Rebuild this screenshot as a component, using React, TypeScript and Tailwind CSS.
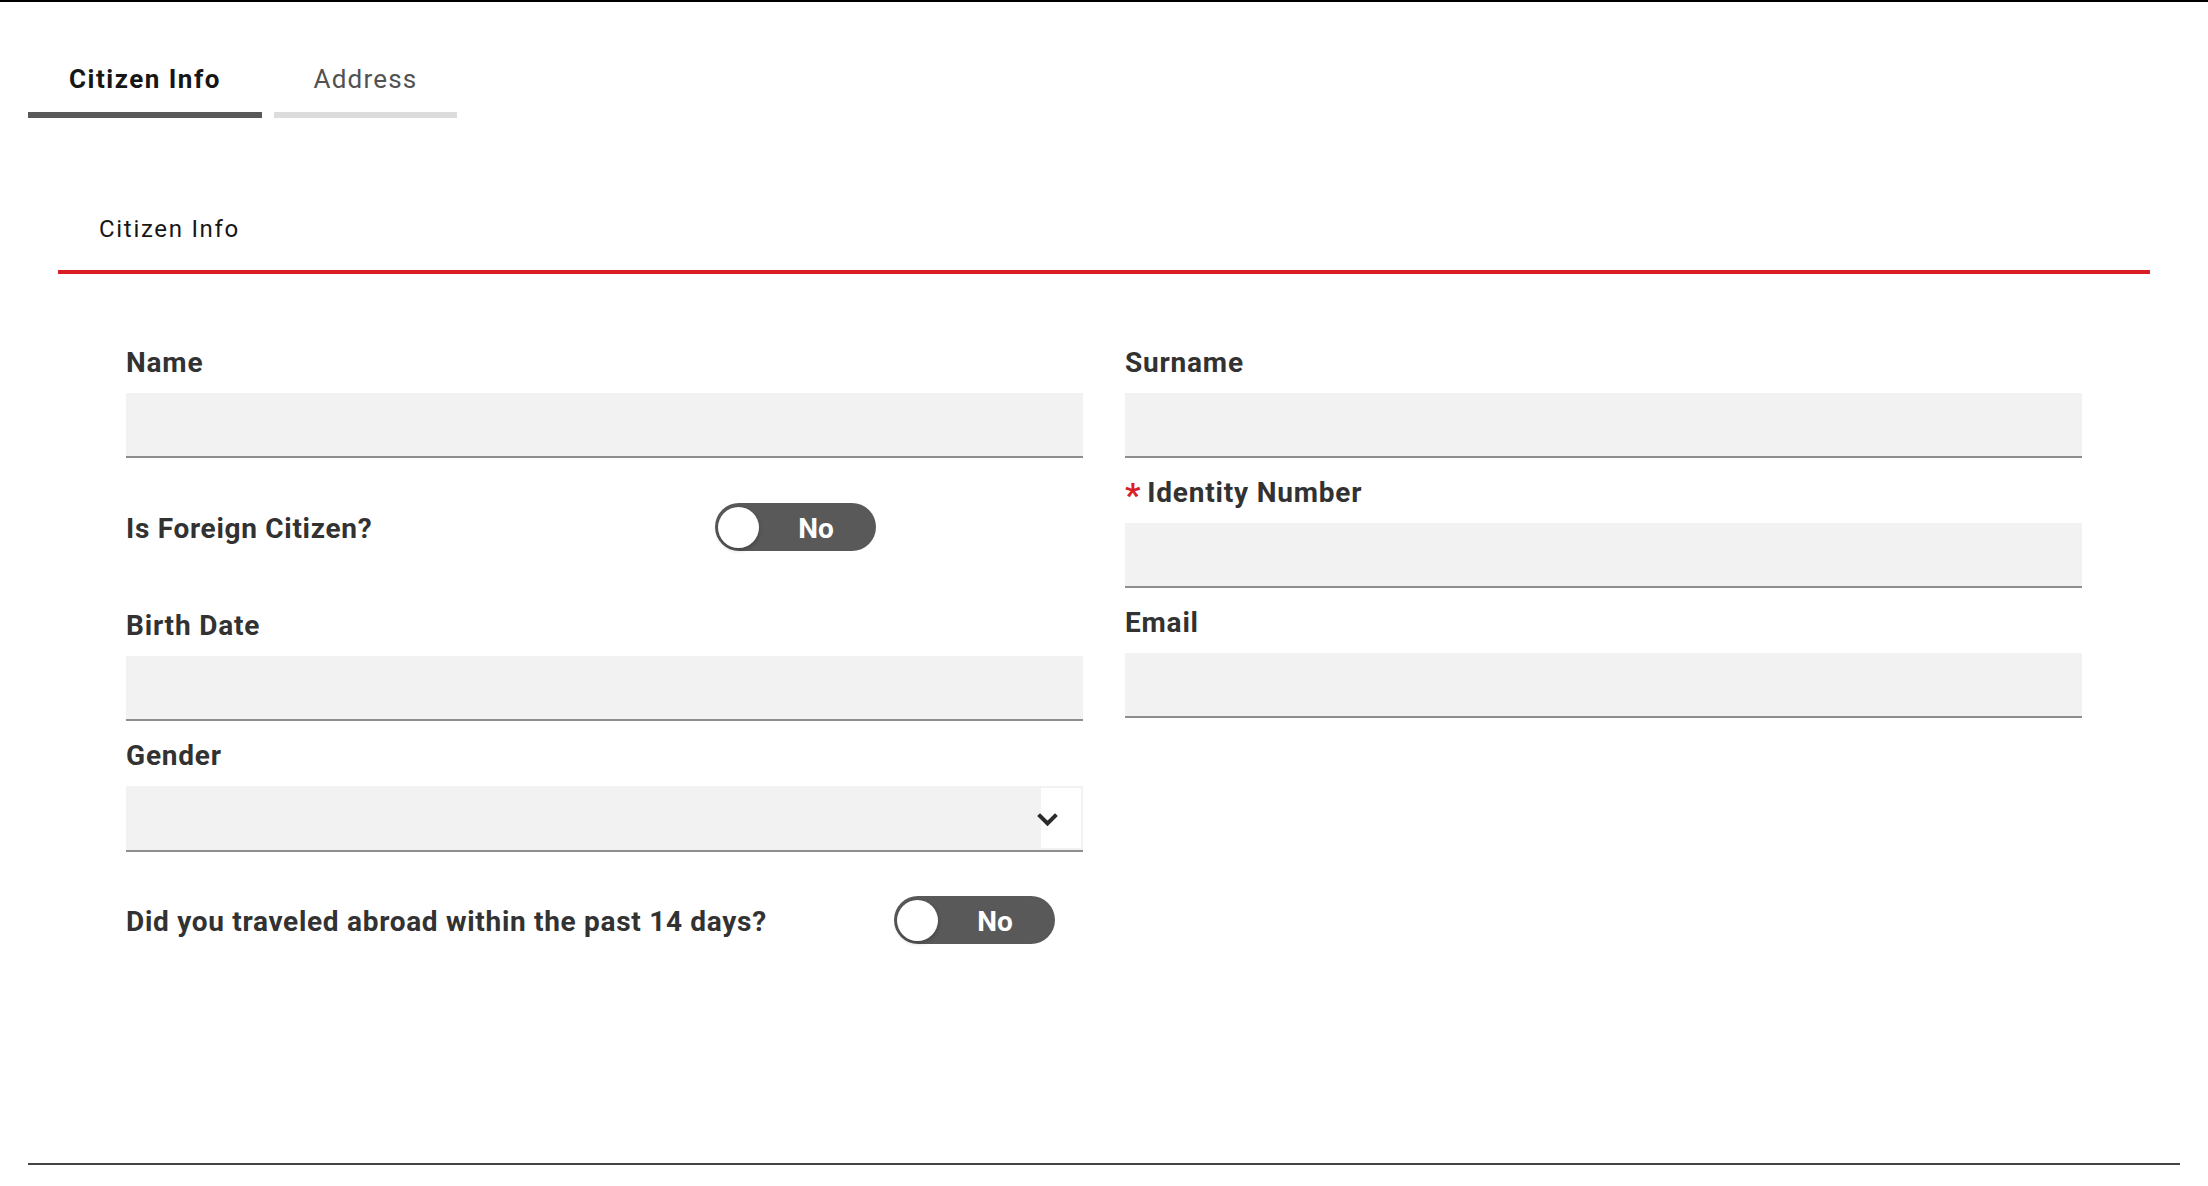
import { useState } from "react";

interface FieldProps {
  label: string;
  required?: boolean;
  className?: string;
}

const labelClass =
  "mb-[12px] block text-[28px] font-bold leading-[36px] tracking-[0.8px] text-[#323232]";

function Field({ label, required, className = "" }: FieldProps) {
  return (
    <div className={className}>
      <label className={labelClass}>
        {required && (
          <span className="mr-[6px] align-[-5px] text-[34px] leading-[0] text-[#da1e28]">
            *
          </span>
        )}
        {label}
      </label>
      <input
        type="text"
        className="block h-[65px] w-full border-b-2 border-[#8d8d8d] bg-[#f2f2f2] px-4 text-[24px] outline-none"
      />
    </div>
  );
}

function SelectField({ label, className = "" }: FieldProps) {
  return (
    <div className={className}>
      <label className={labelClass}>{label}</label>
      <div className="relative h-[66px] w-full border-b-2 border-[#8d8d8d] bg-[#f2f2f2]">
        <div className="absolute top-[2px] right-[2px] bottom-[2px] w-[40px] bg-white" />
        <svg
          className="absolute top-[26px] right-[25px] h-[16px] w-[21px]"
          viewBox="0 0 21 16"
          fill="none"
        >
          <path
            d="M3 4 L10.5 11.5 L18 4"
            stroke="#2b2b2b"
            strokeWidth="4"
            strokeLinecap="square"
          />
        </svg>
      </div>
    </div>
  );
}

interface ToggleRowProps {
  label: string;
  labelWidth: string;
  className?: string;
}

function ToggleRow({ label, labelWidth, className = "" }: ToggleRowProps) {
  const [on, setOn] = useState(false);
  return (
    <div className={`flex items-center ${className}`}>
      <span
        className={`${labelWidth} pt-[4px] text-[28px] font-bold leading-[36px] tracking-[0.7px] text-[#323232]`}
      >
        {label}
      </span>
      <button
        type="button"
        onClick={() => setOn(!on)}
        className="flex h-[48px] w-[161px] items-center rounded-full bg-[#595959] p-[3px]"
      >
        <span className="h-[41px] w-[41px] rounded-full bg-white shadow-[0_2px_4px_rgba(0,0,0,0.25)]" />
        <span className="flex-1 pt-[3px] text-center text-[28px] font-bold leading-[36px] text-white">
          {on ? "Yes" : "No"}
        </span>
      </button>
    </div>
  );
}

export default function App() {
  const [tab, setTab] = useState("citizen");

  return (
    <div className="min-h-screen border-t-2 border-black bg-white font-['Roboto',sans-serif]">
      <div className="px-[28px]">
        <div className="flex gap-[12px] pt-[59px]">
          <button
            type="button"
            onClick={() => setTab("citizen")}
            className={`w-[234px] border-b-[6px] pb-[15px] text-center text-[26px] leading-[36px] ${
              tab === "citizen"
                ? "border-[#595959] font-bold tracking-[1.5px] text-[#161616]"
                : "border-[#dcdcdc] tracking-[1.2px] text-[#525252]"
            }`}
          >
            Citizen Info
          </button>
          <button
            type="button"
            onClick={() => setTab("address")}
            className={`w-[183px] border-b-[6px] pb-[15px] text-center text-[26px] leading-[36px] ${
              tab === "address"
                ? "border-[#595959] font-bold tracking-[1.5px] text-[#161616]"
                : "border-[#dcdcdc] tracking-[1.2px] text-[#525252]"
            }`}
          >
            Address
          </button>
        </div>

        <div className="border-b-2 border-[#444444] px-[30px] pb-[219px]">
          <div className="border-b-4 border-[#da1e28] pt-[95px] pb-[25px] pl-[41px] text-[24px] leading-[32px] tracking-[1.7px] text-[#161616]">
            Citizen Info
          </div>

          <div className="grid grid-cols-2 gap-x-[42px] px-[68px] pt-[71px]">
            <div className="flex flex-col">
              <Field label="Name" />
              <ToggleRow
                label="Is Foreign Citizen?"
                labelWidth="w-[589px]"
                className="mt-[45px]"
              />
              <Field label="Birth Date" className="mt-[57px]" />
              <SelectField label="Gender" className="mt-[17px]" />
              <ToggleRow
                label="Did you traveled abroad within the past 14 days?"
                labelWidth="w-[768px]"
                className="mt-[44px]"
              />
            </div>
            <div className="flex flex-col">
              <Field label="Surname" />
              <Field label="Identity Number" required className="mt-[17px]" />
              <Field label="Email" className="mt-[17px]" />
            </div>
          </div>
        </div>
      </div>
    </div>
  );
}
